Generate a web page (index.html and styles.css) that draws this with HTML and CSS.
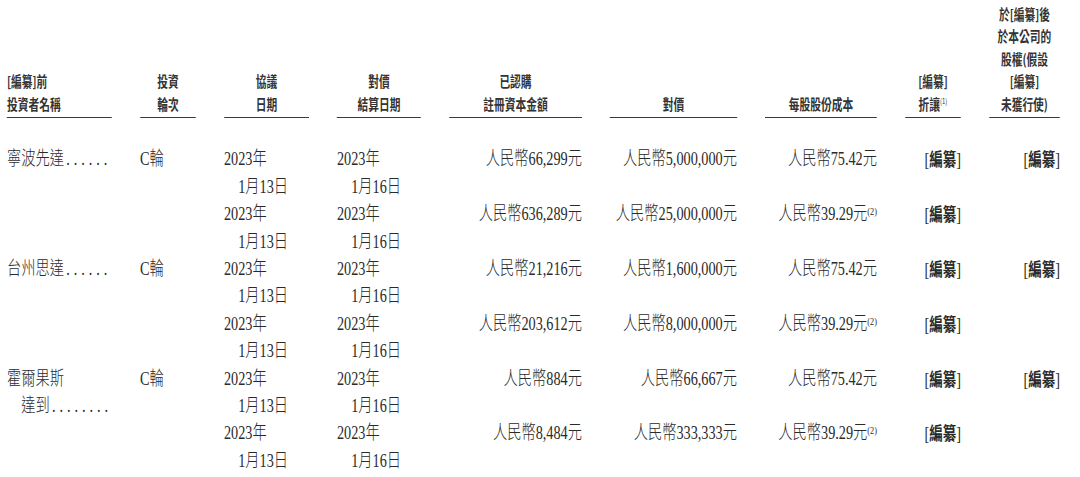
FILE: index.html
```html
<!DOCTYPE html>
<html lang="zh-Hant">
<head>
<meta charset="utf-8">
<title>投資者</title>
<link rel="stylesheet" href="styles.css">
</head>
<body>
<div class="frame">
<div class="page">
  <div class="grid thead">
    <div class="th left"><div>[編纂]前</div><div>投資者名稱</div></div>
    <div class="th"><div>投資</div><div>輪次</div></div>
    <div class="th"><div>協議</div><div>日期</div></div>
    <div class="th"><div>對價</div><div>結算日期</div></div>
    <div class="th"><div>已認購</div><div>註冊資本金額</div></div>
    <div class="th"><div>對價</div></div>
    <div class="th"><div>每股股份成本</div></div>
    <div class="th"><div>[編纂]</div><div>折讓<sup class="hnote">(1)</sup></div></div>
    <div class="th"><div>於[編纂]後</div><div>於本公司的</div><div>股權(假設</div><div>[編纂]</div><div>未獲行使)</div></div>
  </div>

  <div class="grid tbody">
    <!-- 寧波先達 1 -->
    <div class="cell"><div>寧波先達<span class="dots">......</span></div></div>
    <div class="cell"><div>C輪</div></div>
    <div class="cell"><div>2023年</div><div class="ind">1月13日</div></div>
    <div class="cell"><div>2023年</div><div class="ind">1月16日</div></div>
    <div class="cell r"><div>人民幣66,299元</div></div>
    <div class="cell r"><div>人民幣5,000,000元</div></div>
    <div class="cell r"><div>人民幣75.42元</div></div>
    <div class="cell r"><div>[<b>編纂</b>]</div></div>
    <div class="cell r"><div>[<b>編纂</b>]</div></div>
    <!-- 寧波先達 2 -->
    <div class="cell"></div>
    <div class="cell"></div>
    <div class="cell"><div>2023年</div><div class="ind">1月13日</div></div>
    <div class="cell"><div>2023年</div><div class="ind">1月16日</div></div>
    <div class="cell r"><div>人民幣636,289元</div></div>
    <div class="cell r"><div>人民幣25,000,000元</div></div>
    <div class="cell r"><div>人民幣39.29元<sup class="note">(2)</sup></div></div>
    <div class="cell r"><div>[<b>編纂</b>]</div></div>
    <div class="cell r"></div>
    <!-- 台州思達 1 -->
    <div class="cell"><div>台州思達<span class="dots">......</span></div></div>
    <div class="cell"><div>C輪</div></div>
    <div class="cell"><div>2023年</div><div class="ind">1月13日</div></div>
    <div class="cell"><div>2023年</div><div class="ind">1月16日</div></div>
    <div class="cell r"><div>人民幣21,216元</div></div>
    <div class="cell r"><div>人民幣1,600,000元</div></div>
    <div class="cell r"><div>人民幣75.42元</div></div>
    <div class="cell r"><div>[<b>編纂</b>]</div></div>
    <div class="cell r"><div>[<b>編纂</b>]</div></div>
    <!-- 台州思達 2 -->
    <div class="cell"></div>
    <div class="cell"></div>
    <div class="cell"><div>2023年</div><div class="ind">1月13日</div></div>
    <div class="cell"><div>2023年</div><div class="ind">1月16日</div></div>
    <div class="cell r"><div>人民幣203,612元</div></div>
    <div class="cell r"><div>人民幣8,000,000元</div></div>
    <div class="cell r"><div>人民幣39.29元<sup class="note">(2)</sup></div></div>
    <div class="cell r"><div>[<b>編纂</b>]</div></div>
    <div class="cell r"></div>
    <!-- 霍爾果斯達到 1 -->
    <div class="cell"><div>霍爾果斯</div><div class="ind">達到<span class="dots">........</span></div></div>
    <div class="cell"><div>C輪</div></div>
    <div class="cell"><div>2023年</div><div class="ind">1月13日</div></div>
    <div class="cell"><div>2023年</div><div class="ind">1月16日</div></div>
    <div class="cell r"><div>人民幣884元</div></div>
    <div class="cell r"><div>人民幣66,667元</div></div>
    <div class="cell r"><div>人民幣75.42元</div></div>
    <div class="cell r"><div>[<b>編纂</b>]</div></div>
    <div class="cell r"><div>[<b>編纂</b>]</div></div>
    <!-- 霍爾果斯達到 2 -->
    <div class="cell"></div>
    <div class="cell"></div>
    <div class="cell"><div>2023年</div><div class="ind">1月13日</div></div>
    <div class="cell"><div>2023年</div><div class="ind">1月16日</div></div>
    <div class="cell r"><div>人民幣8,484元</div></div>
    <div class="cell r"><div>人民幣333,333元</div></div>
    <div class="cell r"><div>人民幣39.29元<sup class="note">(2)</sup></div></div>
    <div class="cell r"><div>[<b>編纂</b>]</div></div>
    <div class="cell r"></div>
  </div>
</div>
</div>
</body>
</html>
```

FILE: styles.css
```css
html, body {
  margin: 0;
  padding: 0;
  background: #ffffff;
}

.frame {
  width: 1080px;
  height: 477px;
  overflow: hidden;
}

.page {
  width: 1436px;
  box-sizing: border-box;
  padding: 2.5px 0 0 9.33px;
  transform: scaleX(0.75);
  transform-origin: 0 0;
  color: #2a2a2a;
  font-family: "Liberation Serif", "Noto Sans CJK TC", serif;
  font-size: 19px;
}

.grid {
  display: grid;
  grid-template-columns: 140px 74.67px 113.33px 112px 177.33px 169.33px 149.33px 74.67px 94.67px;
  column-gap: 37.33px;
}

.thead {
  align-items: end;
  font-family: "Noto Sans CJK TC", sans-serif;
  font-size: 14.3px;
  font-weight: 700;
  line-height: 22.6px;
  color: #333333;
}

.th {
  text-align: center;
  padding-bottom: 1.5px;
  border-bottom: 1.5px solid #3a3a3a;
}

.th.left {
  text-align: left;
}

.hnote {
  font-size: 8px;
  vertical-align: 6px;
  line-height: 0;
  font-weight: 400;
}

.tbody {
  margin-top: 27.5px;
  grid-auto-rows: 54.8px;
  line-height: 27.4px;
  font-weight: 300;
}

.cell {
  white-space: nowrap;
}

.r {
  text-align: right;
}

.ind {
  padding-left: 1em;
}

.dots {
  margin-left: 3px;
  letter-spacing: 5.25px;
}

.cell b {
  font-family: "Noto Sans CJK TC", sans-serif;
  font-weight: 700;
  font-size: 18px;
}

.note {
  font-size: 11px;
  vertical-align: 5px;
  line-height: 0;
}
```
